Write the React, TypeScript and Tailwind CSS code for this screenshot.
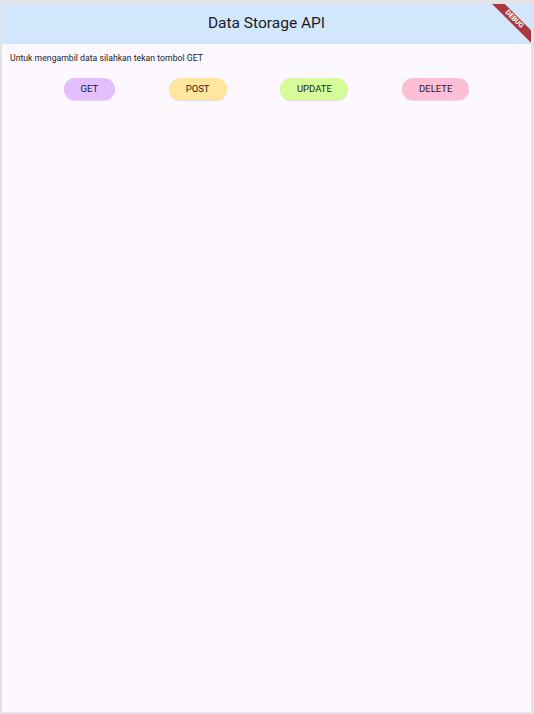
const buttons = [
  { label: "GET", color: "bg-[#e3c0fd]", width: "w-[51px]" },
  { label: "POST", color: "bg-[#ffe69f]", width: "w-[58px]" },
  { label: "UPDATE", color: "bg-[#d5fc98]", width: "w-[68px]" },
  { label: "DELETE", color: "bg-[#fdbfd5]", width: "w-[67px]" },
];

function DebugBanner() {
  return (
    <div className="absolute top-0 right-0 w-[44px] h-[44px] overflow-hidden pointer-events-none">
      <div className="absolute top-[11px] right-[-16px] w-[66px] h-[9px] rotate-45 bg-[#a8383d] flex items-center justify-center">
        <span className="text-[7px] font-bold leading-none text-white">DEBUG</span>
      </div>
    </div>
  );
}

export default function App() {
  return (
    <div
      className="w-[534px] h-[714px] bg-[#e3e2e7] pl-[2px] pr-[3px] pt-[4px] pb-[2px]"
      style={{ fontFamily: "Roboto, 'Noto Sans', sans-serif" }}
    >
      <div className="relative w-full h-full bg-[#fdf7ff] flex flex-col">
        <header className="h-[40px] bg-[#d3e7fc] flex items-center justify-center">
          <h1 className="text-[15.5px] text-[#1b1b1f]">Data Storage API</h1>
        </header>
        <DebugBanner />
        <main className="px-[8px] pt-[9px]">
          <p className="text-[8.7px] text-[#1b1b1f] leading-[10px]">
            Untuk mengambil data silahkan tekan tombol GET
          </p>
          <div className="mt-[15px] flex justify-evenly">
            {buttons.map((b) => (
              <button
                key={b.label}
                className={`${b.color} ${b.width} h-[22px] rounded-full text-[9.5px] text-[#1b1b1f] shadow-[0_1px_1px_rgba(0,0,0,0.12)]`}
              >
                {b.label}
              </button>
            ))}
          </div>
        </main>
      </div>
    </div>
  );
}
